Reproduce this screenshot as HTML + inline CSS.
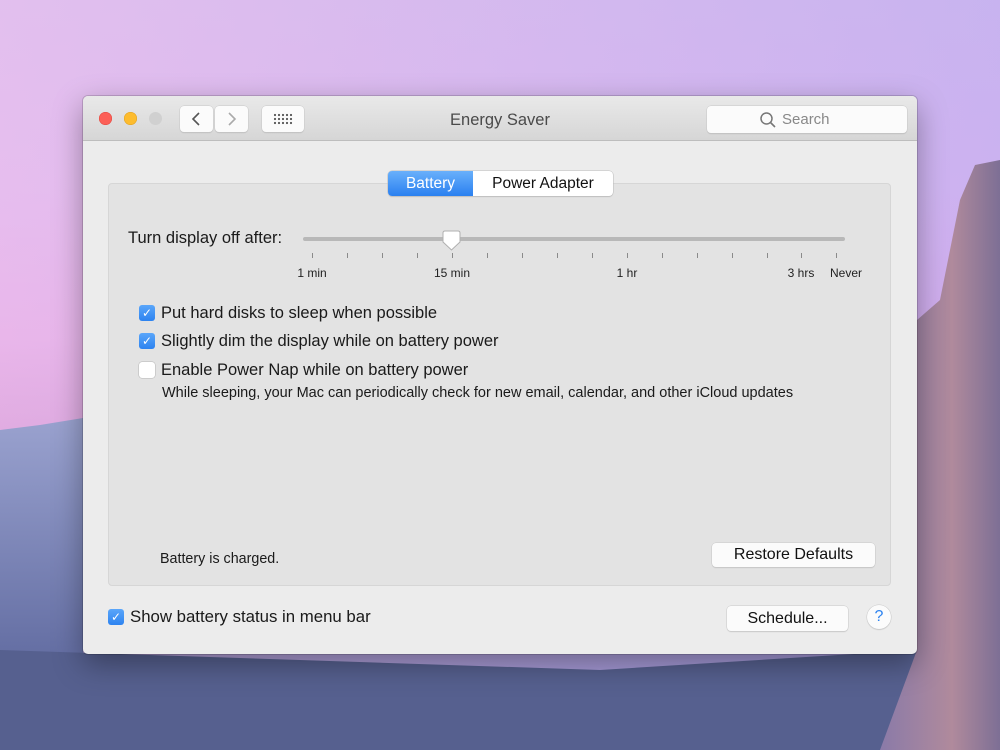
<!DOCTYPE html>
<html><head><meta charset="utf-8"><style>
*{margin:0;padding:0;box-sizing:border-box}
body{width:1000px;height:750px;overflow:hidden;position:relative;font-family:"Liberation Sans",sans-serif;
background:linear-gradient(180deg,#dcc0ef 0%,#e2bdf0 25%,#e6b3ea 45%,#d9a3dc 58%,#b99bd3 70%,#7d86bd 100%);}
.bgr{position:absolute;inset:0;background:linear-gradient(90deg,rgba(240,190,235,.3),rgba(170,160,240,.4));}
.win{position:absolute;left:83px;top:96px;width:834px;height:558px;background:#ececec;border-radius:5px;box-shadow:0 10px 30px rgba(0,0,0,.35),0 0 0 1px rgba(0,0,0,.15);overflow:hidden}
.tb{height:45px;background:linear-gradient(#e9e9e9,#d6d6d6);border-bottom:1px solid #bdbdbd;position:relative}
.dot{position:absolute;top:16px;width:13px;height:13px;border-radius:50%}
.btn{position:absolute;background:#fbfbfb;border-radius:4px;box-shadow:0 0 0 .5px #c8c8c8,0 1px 1px rgba(0,0,0,.15)}
.title{position:absolute;left:0;right:0;top:15px;text-align:center;font-size:16.5px;color:#4a4a4a}
.box{position:absolute;left:25px;top:87px;width:783px;height:403px;background:#e3e3e3;border:1px solid #d6d6d6;border-radius:4px}
.t{position:absolute;white-space:nowrap;color:#1a1a1a}
.cb{position:absolute;width:16px;height:16px;border-radius:3px;background:linear-gradient(#5aa6fa,#2d83f0);color:#fff;font-size:12px;text-align:center;line-height:16px}
.cb.off{background:#fff;box-shadow:0 0 0 .5px #b5b5b5}
.tick{position:absolute;top:157px;width:1px;height:5px;background:#8a8a8a}
.lbl{position:absolute;top:170px;font-size:12px;color:#222;transform:translateX(-50%)}
</style></head><body>
<div class="bgr"></div>
<svg style="position:absolute;left:0;top:0" width="1000" height="750">
<defs><linearGradient id="m" x1="0" y1="0" x2="0" y2="1"><stop offset="0" stop-color="#9aa2cf"/><stop offset="1" stop-color="#4f5a92"/></linearGradient>
<linearGradient id="c" x1="0" y1="0" x2="1" y2="0"><stop offset="0" stop-color="#8a7aa8"/><stop offset=".6" stop-color="#b08a9c"/><stop offset="1" stop-color="#7d6f95"/></linearGradient></defs>
<polygon points="0,430 40,425 83,418 83,750 0,750" fill="url(#m)"/>
<polygon points="0,650 300,660 600,670 917,650 1000,690 1000,750 0,750" fill="#56608f"/>
<polygon points="917,320 940,300 960,200 975,165 1000,160 1000,750 880,750 917,650" fill="url(#c)"/>
</svg>
<div class="win">
 <div class="tb">
  <div class="dot" style="left:16px;background:#fc5f57;box-shadow:inset 0 0 0 .5px #de4b43"></div>
  <div class="dot" style="left:41px;background:#fdbc2e;box-shadow:inset 0 0 0 .5px #dfa023"></div>
  <div class="dot" style="left:66px;background:#d0d0d0"></div>
  <div class="btn" style="left:97px;top:10px;width:33px;height:26px"><svg width="33" height="26"><path d="M19 7 L13 13 L19 19" fill="none" stroke="#555" stroke-width="1.6"/></svg></div>
  <div class="btn" style="left:132px;top:10px;width:33px;height:26px"><svg width="33" height="26"><path d="M14 7 L20 13 L14 19" fill="none" stroke="#aaa" stroke-width="1.6"/></svg></div>
  <div class="btn" style="left:179px;top:10px;width:42px;height:26px"><svg width="42" height="26"><g fill="#555"><circle cx="13" cy="9" r="1.1"/><circle cx="17" cy="9" r="1.1"/><circle cx="21" cy="9" r="1.1"/><circle cx="25" cy="9" r="1.1"/><circle cx="29" cy="9" r="1.1"/><circle cx="13" cy="13" r="1.1"/><circle cx="17" cy="13" r="1.1"/><circle cx="21" cy="13" r="1.1"/><circle cx="25" cy="13" r="1.1"/><circle cx="29" cy="13" r="1.1"/><circle cx="13" cy="17" r="1.1"/><circle cx="17" cy="17" r="1.1"/><circle cx="21" cy="17" r="1.1"/><circle cx="25" cy="17" r="1.1"/><circle cx="29" cy="17" r="1.1"/></g></svg></div>
  <div class="title">Energy Saver</div>
  <div class="btn" style="left:624px;top:10px;width:200px;height:27px"><svg style="position:absolute;left:52px;top:5px" width="18" height="18"><circle cx="7.5" cy="7.5" r="5.5" fill="none" stroke="#777" stroke-width="1.5"/><path d="M11.5 11.5 L16 16" stroke="#777" stroke-width="1.6"/></svg><span style="position:absolute;left:75px;top:5px;font-size:15px;color:#888">Search</span></div>
 </div>
 <div class="box"></div>
 <div style="position:absolute;left:305px;top:75px;width:225px;height:25px;background:#fff;border-radius:4px;box-shadow:0 0 0 .5px #bbb,0 1px 1px rgba(0,0,0,.15)">
  <div style="position:absolute;left:0;top:0;width:85px;height:25px;background:linear-gradient(#69b0fb,#2a80f0);border-radius:4px 0 0 4px;color:#fff;font-size:15.5px;text-align:center;line-height:25px">Battery</div>
  <div style="position:absolute;left:85px;top:0;width:140px;height:25px;color:#111;font-size:15.5px;text-align:center;line-height:25px">Power Adapter</div>
 </div>
 <div class="t" style="left:45px;top:133px;font-size:16.5px">Turn display off after:</div>
 <div style="position:absolute;left:220px;top:141px;width:542px;height:4px;background:#b8b8b8;border-radius:2px"></div>
 <svg style="position:absolute;left:358px;top:134px" width="22" height="24"><path d="M2 3 Q2 1 4 1 L17 1 Q19 1 19 3 L19 12 L10.5 20 L2 12 Z" fill="#fff" stroke="#b0b0b0"/></svg>
 <div class="tick" style="left:229px"></div><div class="tick" style="left:264px"></div><div class="tick" style="left:299px"></div><div class="tick" style="left:334px"></div><div class="tick" style="left:369px"></div><div class="tick" style="left:404px"></div><div class="tick" style="left:439px"></div><div class="tick" style="left:474px"></div><div class="tick" style="left:509px"></div><div class="tick" style="left:544px"></div><div class="tick" style="left:579px"></div><div class="tick" style="left:614px"></div><div class="tick" style="left:649px"></div><div class="tick" style="left:684px"></div><div class="tick" style="left:718px"></div><div class="tick" style="left:753px"></div>
 <div class="lbl" style="left:229px">1 min</div><div class="lbl" style="left:369px">15 min</div><div class="lbl" style="left:544px">1 hr</div><div class="lbl" style="left:718px">3 hrs</div><div class="lbl" style="left:763px">Never</div>
 <div class="cb" style="left:56px;top:209px">✓</div><div class="t" style="left:78px;top:208px;font-size:16.5px">Put hard disks to sleep when possible</div>
 <div class="cb" style="left:56px;top:237px">✓</div><div class="t" style="left:78px;top:236px;font-size:16.5px">Slightly dim the display while on battery power</div>
 <div class="cb off" style="left:56px;top:266px"></div><div class="t" style="left:78px;top:265px;font-size:16.5px">Enable Power Nap while on battery power</div>
 <div class="t" style="left:79px;top:289px;font-size:14.5px">While sleeping, your Mac can periodically check for new email, calendar, and other iCloud updates</div>
 <div class="t" style="left:77px;top:455px;font-size:14.3px">Battery is charged.</div>
 <div class="btn" style="left:629px;top:447px;width:163px;height:24px;font-size:16px;text-align:center;line-height:24px;color:#111">Restore Defaults</div>
 <div class="cb" style="left:25px;top:513px">✓</div><div class="t" style="left:47px;top:511px;font-size:16.8px">Show battery status in menu bar</div>
 <div class="btn" style="left:644px;top:510px;width:121px;height:25px;font-size:16px;text-align:center;line-height:25px;color:#111">Schedule...</div>
 <div class="btn" style="left:784px;top:509px;width:24px;height:24px;border-radius:50%;text-align:center;line-height:24px;color:#2d83f0;font-size:16px">?</div>
</div>
</body></html>
